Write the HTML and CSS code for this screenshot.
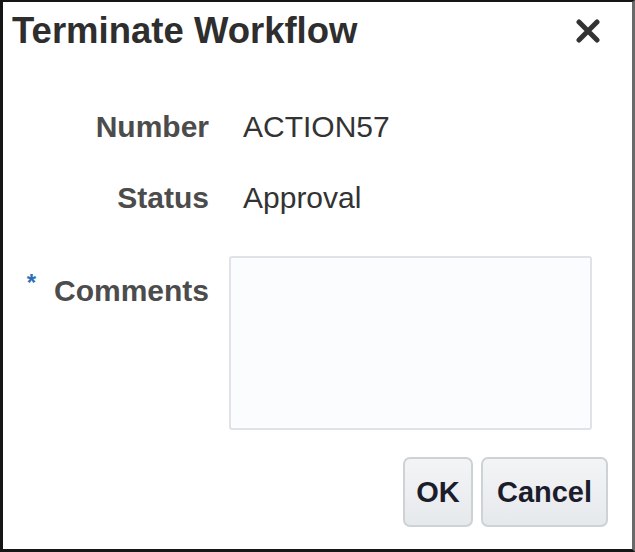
FILE: index.html
```html
<!DOCTYPE html>
<html>
<head>
<meta charset="utf-8">
<link rel="stylesheet" href="styles.css">
</head>
<body>
<div class="dialog">
  <header class="hd">
    <h1 class="title">Terminate Workflow</h1>
    <button class="close" aria-label="Close">
      <svg width="24" height="24" viewBox="0 0 24 24"><path d="M3 3L21 21M21 3L3 21" stroke="#333" stroke-width="5" stroke-linecap="round"/></svg>
    </button>
  </header>
  <div class="form">
    <div class="lbl r1">Number</div><div class="val r1">ACTION57</div>
    <div class="lbl r2">Status</div><div class="val r2">Approval</div>
    <div class="lbl r3"><span class="ast">*</span>Comments</div><textarea class="ta r3"></textarea>
  </div>
  <div class="actions">
    <button class="btn ok">OK</button>
    <button class="btn cancel">Cancel</button>
  </div>
</div>
</body>
</html>
```
FILE: styles.css
```css
html, body { margin: 0; padding: 0; background: #fff; }
body { width: 635px; height: 552px; font-family: "Liberation Sans", Arial, sans-serif; }
.dialog {
  box-sizing: border-box;
  width: 635px; height: 552px;
  border-style: solid;
  border-width: 2px 3px 3px 3px;
  border-color: #151515 #6a6a6a #151515 #151515;
  display: flex; flex-direction: column;
}
.hd {
  display: flex; justify-content: space-between; align-items: flex-start;
  padding: 9px 32px 0 9px;
}
.title {
  margin: 0; font-size: 36.5px; line-height: 40px; font-weight: bold; color: #2e2e2e;
}
.close {
  border: 0; background: none; padding: 0; margin-top: 8px; width: 24px; height: 24px; display: block;
}
.close svg { display: block; }
.form {
  display: grid;
  grid-template-columns: 206px 1fr;
  column-gap: 20px;
  margin-top: 59px;
  padding-right: 40px;
  font-size: 30px; line-height: 34px;
}
.lbl { text-align: right; font-weight: bold; color: #4c4c4c; }
.val { color: #333; padding-left: 14px; }
.r2 { margin-top: 37px; }
.lbl.r3 { margin-top: 59px; }
.ast {
  color: #2a6fb8; font-size: 24px; line-height: 0; vertical-align: 10px;
  font-weight: bold; margin-right: 18px;
}
.ta {
  box-sizing: border-box; height: 174px; resize: none; width: 363px;
  border: 2px solid #dfe3e7; border-radius: 3px; background: #fbfcfd; margin: 41px 0 0 0;
}
.actions {
  margin-top: auto; display: flex; justify-content: flex-end; gap: 8px;
  padding: 0 24px 22px 0;
}
.btn {
  box-sizing: border-box; height: 70px;
  font-family: "Liberation Sans", Arial, sans-serif; font-size: 29px; font-weight: bold;
  color: #1b1c2c; background: linear-gradient(#f3f4f6, #e6e9ec);
  border: 2px solid #cdd2d7; border-radius: 7px; padding: 0;
}
.ok { width: 70px; }
.cancel { width: 127px; }
```
